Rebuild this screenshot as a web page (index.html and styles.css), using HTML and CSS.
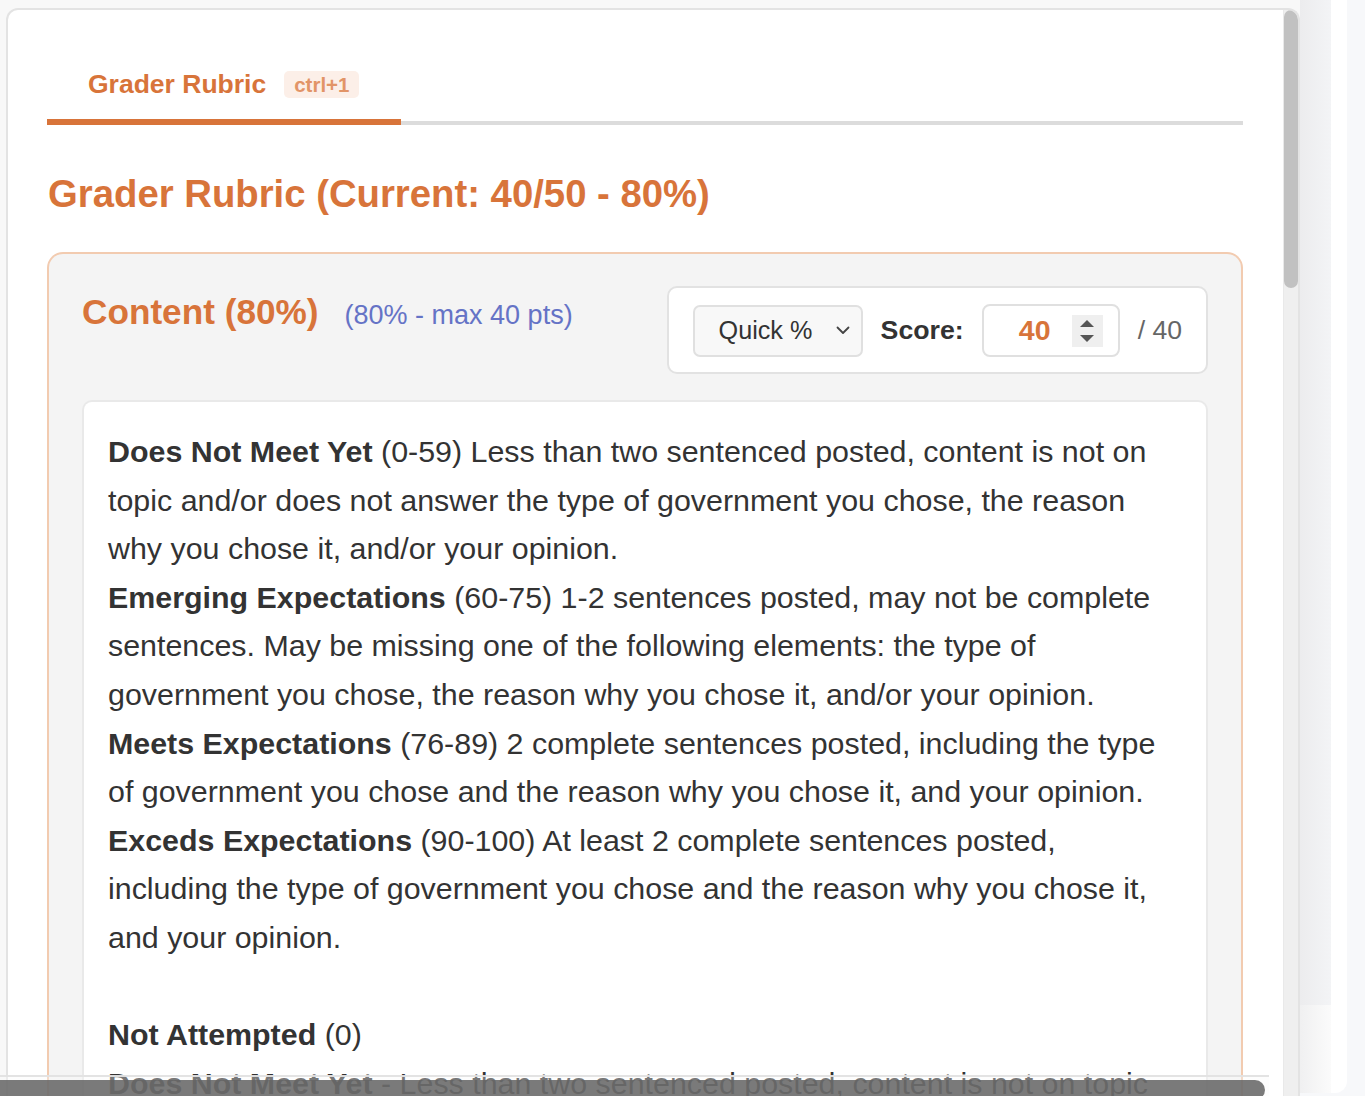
FILE: index.html
```html
<!DOCTYPE html>
<html lang="en">
<head>
<meta charset="utf-8">
<title>Grader Rubric</title>
<link rel="stylesheet" href="styles.css">
</head>
<body>
<div class="page">
  <div class="main-wrap">
    <section class="panel">
      <div class="panel-body">
        <nav class="tabs">
          <div class="tab active">
            <span class="tab-label">Grader Rubric</span>
            <span class="kbd">ctrl+1</span>
          </div>
          <div class="tab-fill"></div>
        </nav>

        <h2 class="rubric-title">Grader Rubric (Current: 40/50 - 80%)</h2>

        <div class="criterion">
          <div class="criterion-head">
            <div class="criterion-name">
              <h3>Content (80%)</h3>
              <span class="criterion-meta">(80% - max 40 pts)</span>
            </div>
            <div class="score-box">
              <div class="select">
                <span>Quick %</span>
                <svg class="chev" width="14" height="9" viewBox="0 0 14 9"><path d="M1.5 1.5 L7 7 L12.5 1.5" fill="none" stroke="#444" stroke-width="1.8" stroke-linecap="round" stroke-linejoin="round"/></svg>
              </div>
              <span class="score-label">Score:</span>
              <div class="num-input">
                <span class="num-val">40</span>
                <span class="spin">
                  <svg width="16" height="26" viewBox="0 0 16 26"><path d="M8 2 L15 9 L1 9 Z" fill="#555"/><path d="M1 17 L15 17 L8 24 Z" fill="#555"/></svg>
                </span>
              </div>
              <span class="score-max">/ 40</span>
            </div>
          </div>

          <div class="criteria-text">
            <p><b>Does Not Meet Yet</b> (0-59) Less than two sentenced posted, content is not on topic and/or does not answer the type of government you chose, the reason why you chose it, and/or your opinion.<br><b>Emerging Expectations</b> (60-75) 1-2 sentences posted, may not be complete sentences. May be missing one of the following elements: the type of government you chose, the reason why you chose it, and/or your opinion.<br><b>Meets Expectations</b> (76-89) 2 complete sentences posted, including the type of government you chose and the reason why you chose it, and your opinion.<br><b>Exceds Expectations</b> (90-100) At least 2 complete sentences posted, including the type of government you chose and the reason why you chose it, and your opinion.<br><br><b>Not Attempted</b> (0)<br><b>Does Not Meet Yet</b> - Less than two sentenced posted, content is not on topic and/or does not answer the type of government you chose, the reason why you chose it, and/or your opinion.</p>
          </div>
        </div>
      </div>
      <div class="vscroll"><div class="vthumb"></div></div>
    </section>
  </div>
  <aside class="side">
    <div class="side-card">
      <div class="side-strip">
        <div class="strip-top"></div>
        <div class="strip-bottom"></div>
      </div>
    </div>
  </aside>
</div>
<div class="hscroll"><div class="hthumb"></div></div>
</body>
</html>
```

FILE: styles.css
```css
* { box-sizing: border-box; }

html, body {
  margin: 0;
  padding: 0;
  height: 1096px;
  overflow: hidden;
}

body {
  background: #f8f8f8;
  font-family: "Liberation Sans", Arial, Helvetica, sans-serif;
  color: #333;
}

.page {
  display: flex;
  height: 1096px;
}

.main-wrap {
  width: 1300px;
  flex: none;
  padding: 8px 0 0 6px;
}

.panel {
  display: flex;
  height: 1300px;
  background: #fff;
  border: 2px solid #e3e3e3;
  border-bottom: none;
  border-radius: 12px 12px 0 0;
  overflow: hidden;
}

.panel-body {
  flex: 1;
  padding: 37px 40px 0 39px;
}

.vscroll {
  width: 15px;
  flex: none;
  background: #efefef;
  border-left: 1px solid #e9e9e9;
}

.vthumb {
  width: 14px;
  height: 278px;
  background: #c1c1c1;
  border-radius: 8px;
}

/* Tabs */
.tabs {
  display: flex;
  align-items: flex-end;
}

.tab {
  display: flex;
  align-items: center;
  gap: 18px;
  padding: 22px 42px 20px 41px;
  border-bottom: 6px solid #d8743a;
}

.tab-label {
  font-size: 26.5px;
  font-weight: 700;
  color: #d8743a;
  line-height: 30px;
}

.kbd {
  font-size: 20.5px;
  font-weight: 700;
  color: #e29467;
  background: #fcefe8;
  border-radius: 5px;
  padding: 0 10px;
  line-height: 27px;
  height: 27px;
}

.tab-fill {
  flex: 1;
  border-bottom: 4px solid #dcdcdc;
}

.rubric-title {
  margin: 46px 0 35px 1px;
  font-size: 38.3px;
  line-height: 46px;
  font-weight: 700;
  color: #d8743a;
}

/* Criterion card */
.criterion {
  background: #f4f4f4;
  border: 2px solid #f2cbb0;
  border-bottom: none;
  border-radius: 16px 16px 0 0;
  padding: 32px 33px 0 33px;
}

.criterion-head {
  display: flex;
  justify-content: space-between;
  align-items: flex-start;
  margin-bottom: 26px;
}

.criterion-name {
  display: flex;
  align-items: baseline;
  gap: 26px;
  padding-top: 5px;
}

.criterion-name h3 {
  margin: 0;
  font-size: 35.2px;
  line-height: 42px;
  font-weight: 700;
  color: #d8743a;
}

.criterion-meta {
  font-size: 27px;
  color: #6573c6;
}

.score-box {
  display: flex;
  align-items: center;
  gap: 18px;
  background: #fff;
  border: 2px solid #e2e2e2;
  border-radius: 10px;
  padding: 16px 24px 15px 24px;
}

.select {
  display: flex;
  align-items: center;
  justify-content: space-between;
  width: 170px;
  height: 52px;
  padding: 0 11px 0 24px;
  background: #f8f8f8;
  border: 2px solid #e0e0e0;
  border-radius: 7px;
  font-size: 25.2px;
  color: #333;
}

.chev { display: block; }

.score-label {
  font-size: 26.7px;
  font-weight: 700;
  color: #333;
}

.num-input {
  display: flex;
  align-items: center;
  width: 138px;
  height: 53px;
  border: 2px solid #e0e0e0;
  border-radius: 8px;
  padding: 0 15px 0 14px;
}

.num-val {
  flex: 1;
  text-align: center;
  font-size: 28.5px;
  font-weight: 700;
  color: #d8743a;
}

.spin {
  display: flex;
  align-items: center;
  justify-content: center;
  width: 31px;
  height: 32px;
  background: #efefef;
}

.spin svg { display: block; }

.score-max {
  font-size: 26.6px;
  color: #666;
}

.criteria-text {
  background: #fff;
  border: 2px solid #e9e9e9;
  border-bottom: none;
  border-radius: 10px 10px 0 0;
  padding: 25px 24px 0 24px;
  height: 900px;
}

.criteria-text p {
  margin: 0;
  font-size: 30.4px;
  line-height: 48.6px;
  color: #333;
}

.criteria-text b { font-weight: 700; }

/* Right side region */
.side {
  flex: 1;
  display: flex;
  background: #f7f8fa;
}

.side-card {
  width: 47px;
  height: 1093px;
  background: #fff;
  border-radius: 0 0 12px 0;
  overflow: hidden;
}

.side-strip {
  width: 31px;
  height: 100%;
  display: flex;
  flex-direction: column;
}

.strip-top {
  height: 1005px;
  background: linear-gradient(90deg, #ececee, #f3f4f6);
}

.strip-bottom {
  flex: 1;
  background: linear-gradient(90deg, #f0f0f1, #fbfbfb);
}

/* Overlay horizontal scrollbar */
.hscroll {
  position: fixed;
  left: 0;
  bottom: 0;
  width: 1269px;
  height: 21px;
  border-top: 2px solid rgba(225, 225, 225, 0.95);
  background: rgba(250, 250, 250, 0.35);
}

.hthumb {
  margin-top: 3px;
  width: 1265px;
  height: 20px;
  background: rgba(100, 100, 100, 0.86);
  border-radius: 0 10px 10px 0;
}
```
